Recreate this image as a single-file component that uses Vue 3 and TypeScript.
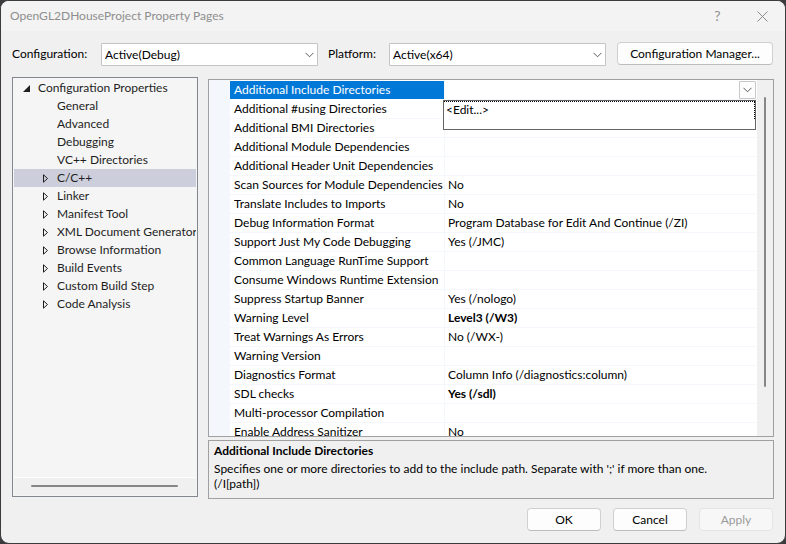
<script setup lang="ts">
import { ref } from 'vue'

interface TreeNode {
  label: string
  expandable: boolean
}

interface PropertyRow {
  name: string
  value: string
  changed?: boolean
}

const configuration = ref('Active(Debug)')
const platform = ref('Active(x64)')
const selectedNode = ref('C/C++')
const selectedRow = ref(0)

const nodes: TreeNode[] = [
  { label: 'General', expandable: false },
  { label: 'Advanced', expandable: false },
  { label: 'Debugging', expandable: false },
  { label: 'VC++ Directories', expandable: false },
  { label: 'C/C++', expandable: true },
  { label: 'Linker', expandable: true },
  { label: 'Manifest Tool', expandable: true },
  { label: 'XML Document Generator', expandable: true },
  { label: 'Browse Information', expandable: true },
  { label: 'Build Events', expandable: true },
  { label: 'Custom Build Step', expandable: true },
  { label: 'Code Analysis', expandable: true },
]

const rows: PropertyRow[] = [
  { name: 'Additional Include Directories', value: '' },
  { name: 'Additional #using Directories', value: '' },
  { name: 'Additional BMI Directories', value: '' },
  { name: 'Additional Module Dependencies', value: '' },
  { name: 'Additional Header Unit Dependencies', value: '' },
  { name: 'Scan Sources for Module Dependencies', value: 'No' },
  { name: 'Translate Includes to Imports', value: 'No' },
  { name: 'Debug Information Format', value: 'Program Database for Edit And Continue (/ZI)' },
  { name: 'Support Just My Code Debugging', value: 'Yes (/JMC)' },
  { name: 'Common Language RunTime Support', value: '' },
  { name: 'Consume Windows Runtime Extension', value: '' },
  { name: 'Suppress Startup Banner', value: 'Yes (/nologo)' },
  { name: 'Warning Level', value: 'Level3 (/W3)', changed: true },
  { name: 'Treat Warnings As Errors', value: 'No (/WX-)' },
  { name: 'Warning Version', value: '' },
  { name: 'Diagnostics Format', value: 'Column Info (/diagnostics:column)' },
  { name: 'SDL checks', value: 'Yes (/sdl)', changed: true },
  { name: 'Multi-processor Compilation', value: '' },
  { name: 'Enable Address Sanitizer', value: 'No' },
]
</script>

<template>
  <main class="dialog">
    <header class="titlebar">
      <h1>OpenGL2DHouseProject Property Pages</h1>
      <button class="caption" type="button" aria-label="Help">?</button>
      <button class="caption" type="button" aria-label="Close">
        <svg width="11" height="11" viewBox="0 0 11 11"><path d="M.5 .5l10 10M10.500 .5l-10 10" /></svg>
      </button>
    </header>

    <div class="toolbar">
      <label class="config-label" for="configuration">Configuration:</label>
      <span class="combo">
        <select id="configuration" v-model="configuration">
          <option>Active(Debug)</option>
        </select>
        <svg width="9" height="6" viewBox="0 0 9 6"><path d="M.5 .8l4 4 4-4" /></svg>
      </span>
      <label class="platform-label" for="platform">Platform:</label>
      <span class="combo">
        <select id="platform" v-model="platform">
          <option>Active(x64)</option>
        </select>
        <svg width="9" height="6" viewBox="0 0 9 6"><path d="M.5 .8l4 4 4-4" /></svg>
      </span>
      <button class="push manager" type="button">Configuration Manager...</button>
    </div>

    <div class="content">
      <nav class="tree">
        <ul class="tree-items">
          <li>
            <button class="node root" type="button">
              <svg width="7" height="7" viewBox="0 0 7 7"><path class="solid" d="M7 0v7H0z" /></svg>
              Configuration Properties
            </button>
            <ul>
              <li v-for="node in nodes" :key="node.label">
                <button
                  class="node child"
                  :class="{ selected: node.label === selectedNode }"
                  type="button"
                  @click="selectedNode = node.label"
                >
                  <svg width="6" height="9" viewBox="0 0 6 9">
                    <path v-if="node.expandable" d="M.5 .8v7.400l4-3.700z" />
                  </svg>
                  {{ node.label }}
                </button>
              </li>
            </ul>
          </li>
        </ul>
        <div class="hscroll"><span></span></div>
      </nav>

      <section class="details">
        <div class="grid">
          <div class="gutter"></div>
          <div class="sheet">
            <table>
              <tbody>
                <tr
                  v-for="(row, index) in rows"
                  :key="row.name"
                  :class="{ selected: index === selectedRow }"
                  @click="selectedRow = index"
                >
                  <th scope="row">{{ row.name }}</th>
                  <td :class="{ changed: row.changed }">
                    <div class="cell">
                      {{ row.value }}
                      <button v-if="index === selectedRow" class="drop" type="button" aria-label="Open list">
                        <svg width="9" height="6" viewBox="0 0 9 6"><path d="M.5 .8l4 4 4-4" /></svg>
                      </button>
                    </div>
                    <div v-if="index === selectedRow" class="popup">
                      <button type="button">&lt;Edit...&gt;</button>
                    </div>
                  </td>
                </tr>
              </tbody>
            </table>
          </div>
          <div class="vscroll"><span></span></div>
        </div>
        <div class="description">
          <h2>Additional Include Directories</h2>
          <p>Specifies one or more directories to add to the include path. Separate with ';' if more than one. (/I[path])</p>
        </div>
      </section>
    </div>

    <footer class="actions">
      <button class="push" type="button">OK</button>
      <button class="push" type="button">Cancel</button>
      <button class="push" type="button" disabled>Apply</button>
    </footer>
  </main>
</template>

<style>
body {
  margin: 0;
  background: #3b3a3d;
}
</style>

<style scoped>
* {
  box-sizing: border-box;
}

.dialog {
  display: flex;
  flex-direction: column;
  height: 100vh;
  border: 1px solid #3b3a3d;
  border-radius: 9px;
  overflow: hidden;
  background: #f0f0f0;
  color: #000;
  font: 12px/18px Lato, "Open Sans", sans-serif;
}

button,
select {
  margin: 0;
  padding: 0;
  font: inherit;
  color: inherit;
}

svg {
  display: block;
  fill: none;
  stroke: #5a5a5a;
}

ul {
  margin: 0;
  padding: 0;
  list-style: none;
}

.titlebar {
  display: flex;
  align-items: center;
  height: 30px;
  padding-left: 9px;
  background: #f3f3f3;
  color: #8e8e8e;
}

.titlebar h1 {
  flex: 1;
  margin: 0;
  font-size: 12px;
  font-weight: 400;
}

.caption {
  display: grid;
  place-items: center;
  width: 45px;
  height: 28px;
  border: 0;
  background: none;
  font-size: 14px;
}

.caption svg {
  stroke: #8a8a8a;
}

.toolbar {
  display: flex;
  height: 24px;
  margin: 11px 12px 0 11px;
}

.config-label {
  width: 89px;
  line-height: 24px;
}

.platform-label {
  width: 71px;
  padding-left: 10px;
  line-height: 24px;
}

.combo {
  position: relative;
  flex: 1;
  align-self: flex-end;
  height: 23px;
}

.combo select {
  display: block;
  width: 100%;
  height: 23px;
  padding: 0 20px 0 3px;
  appearance: none;
  border: 1px solid #c4c4c4;
  border-radius: 1px;
  background: #fff;
}

.combo svg {
  position: absolute;
  right: 4px;
  top: 9px;
  pointer-events: none;
}

.push {
  width: 74px;
  height: 23px;
  border: 1px solid #d0d0d0;
  border-bottom-color: #bdbdbd;
  border-radius: 4px;
  background: #fdfdfd;
  line-height: 21px;
}

.push:disabled {
  border-color: #e4e4e4;
  background: #f7f7f7;
  color: #9b9b9b;
}

.manager {
  width: 156px;
  margin-left: 11px;
}

.content {
  flex: 1;
  display: flex;
  gap: 10px;
  min-height: 0;
  margin: 11px 11px 0 11px;
}

.tree {
  display: flex;
  flex-direction: column;
  width: 186px;
  margin-bottom: 2px;
  padding: 1px;
  border: 1px solid #828790;
  background: #f5f5f5;
  color: #1e1e1e;
}

.tree-items {
  flex: 1;
  overflow: hidden;
}

.node {
  display: flex;
  align-items: center;
  width: 100%;
  height: 18px;
  border: 0;
  background: none;
  white-space: nowrap;
  text-align: left;
}

.node svg {
  flex: none;
  stroke: #1e1e1e;
}

.root {
  gap: 8px;
  padding-left: 9px;
}

.root .solid {
  fill: #1e1e1e;
  stroke: none;
}

.child {
  gap: 8px;
  padding-left: 29px;
}

.child.selected {
  background: #cccedb;
}

.hscroll {
  height: 18px;
  padding: 7px 18px 0 17px;
  border-top: 1px solid #fff;
  background: #f0f0f0;
}

.hscroll span {
  display: block;
  height: 2px;
  border-radius: 1px;
  background: #868686;
}

.details {
  flex: 1;
  display: flex;
  flex-direction: column;
  gap: 3px;
  min-width: 0;
  padding-top: 2px;
}

.grid {
  flex: 1;
  display: flex;
  min-height: 0;
  border: 1px solid #a0a0a0;
  background: #fff;
}

.gutter {
  width: 21px;
  background: #f4f7fc;
}

.sheet {
  flex: 1;
  min-width: 0;
  padding-top: 1px;
  overflow: hidden;
}

table {
  width: 100%;
  border-collapse: separate;
  border-spacing: 0;
  table-layout: fixed;
}

th,
td {
  height: 19px;
  padding: 0 0 0 4px;
  border-bottom: 1px solid #f4f7fc;
  font-weight: 400;
  text-align: left;
  white-space: nowrap;
}

th {
  width: 214px;
}

td {
  position: relative;
  border-left: 1px solid #f4f7fc;
  padding-left: 3px;
}

td.changed {
  font-weight: 700;
}

tr.selected th {
  border-color: #fff;
  background: #0078d7;
  background-clip: padding-box;
  color: #fff;
}

.cell {
  display: flex;
  height: 18px;
}

.drop {
  display: grid;
  place-items: center;
  width: 17px;
  height: 18px;
  margin: 0 1px 0 auto;
  border: 1px solid #c8c8c8;
  border-radius: 1px;
  background: #fdfdfd;
}

.popup {
  position: absolute;
  z-index: 1;
  top: 19px;
  left: -2px;
  right: 1px;
  height: 30px;
  border: 1px solid #646464;
  background: #fff;
}

.popup button {
  display: block;
  width: 100%;
  height: 18px;
  padding: 0 0 2px 2px;
  border: 0;
  border-top: 1px dotted #000;
  border-right: 1px dotted #000;
  background: none;
  line-height: 15px;
  text-align: left;
}

.vscroll {
  width: 16px;
  padding: 17px 6px 49px 7px;
  background: #f0f0f0;
}

.vscroll span {
  display: block;
  height: 100%;
  width: 2px;
  border-radius: 1px;
  background: #868686;
}

.description {
  height: 59px;
  padding: 1px 40px 1px 5px;
  border: 1px solid #a0a0a0;
  line-height: 15px;
}

.description h2 {
  margin: 0 0 1px;
  font-size: 12px;
  line-height: 18px;
}

.description p {
  margin: 0;
}

.actions {
  display: flex;
  justify-content: flex-end;
  gap: 12px;
  padding: 9px 12px 12px;
}
</style>
